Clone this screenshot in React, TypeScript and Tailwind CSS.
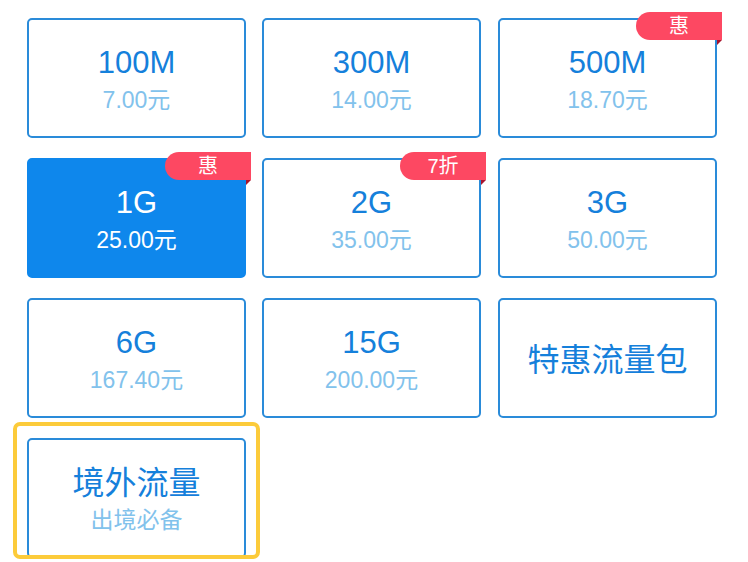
import React from "react";

type Plan = {
  title: string;
  sub?: string;
  badge?: string;
  selected?: boolean;
  highlight?: boolean;
};

const plans: Plan[] = [
  { title: "100M", sub: "7.00元" },
  { title: "300M", sub: "14.00元" },
  { title: "500M", sub: "18.70元", badge: "惠" },
  { title: "1G", sub: "25.00元", badge: "惠", selected: true },
  { title: "2G", sub: "35.00元", badge: "7折" },
  { title: "3G", sub: "50.00元" },
  { title: "6G", sub: "167.40元" },
  { title: "15G", sub: "200.00元" },
  { title: "特惠流量包" },
  { title: "境外流量", sub: "出境必备", highlight: true },
];

function Badge({ text }: { text: string }) {
  return (
    <>
      <div className="absolute -top-[8px] -right-[7px] flex h-[28px] w-[86px] items-center justify-center rounded-l-full bg-[#fd4862] text-[20px] leading-none text-white">
        {text}
      </div>
      <div className="absolute top-[20px] -right-[7px] h-0 w-0 border-t-[5px] border-r-[5px] border-t-[#a9132d] border-r-transparent" />
    </>
  );
}

function PlanCard({ plan }: { plan: Plan }) {
  const cjk = /[\u4e00-\u9fff]/.test(plan.title);
  return (
    <div
      className={`relative flex h-[120px] w-[219px] flex-col items-center justify-center rounded-[5px] border-2 pt-[3px] ${
        plan.selected ? "border-[#0e87ec] bg-[#0e87ec]" : "border-[#2a8bd9] bg-white"
      }`}
    >
      {plan.highlight && (
        <div className="pointer-events-none absolute -top-[18px] -left-[16px] -right-[16px] -bottom-[3px] rounded-[7px] border-4 border-[#fccb3a]" />
      )}
      <div
        className={`leading-[34px] ${cjk ? "text-[32px]" : "text-[31px]"} ${
          plan.selected ? "text-white" : "text-[#1580db]"
        }`}
      >
        {plan.title}
      </div>
      {plan.sub && (
        <div
          className={`mt-[7px] text-[23px] leading-[26px] ${
            plan.selected ? "text-white" : "text-[#82c2ec]"
          }`}
        >
          {plan.sub}
        </div>
      )}
      {plan.badge && <Badge text={plan.badge} />}
    </div>
  );
}

export default function App() {
  return (
    <div
      className="h-[562px] w-[748px] overflow-hidden bg-white pl-[27px] pt-[18px]"
      style={{ fontFamily: '"Liberation Sans", "Noto Sans CJK SC", sans-serif' }}
    >
      <div className="grid grid-cols-[219px_220px_219px] gap-x-4 gap-y-5">
        {plans.map((p) => (
          <PlanCard key={p.title} plan={p} />
        ))}
      </div>
    </div>
  );
}
